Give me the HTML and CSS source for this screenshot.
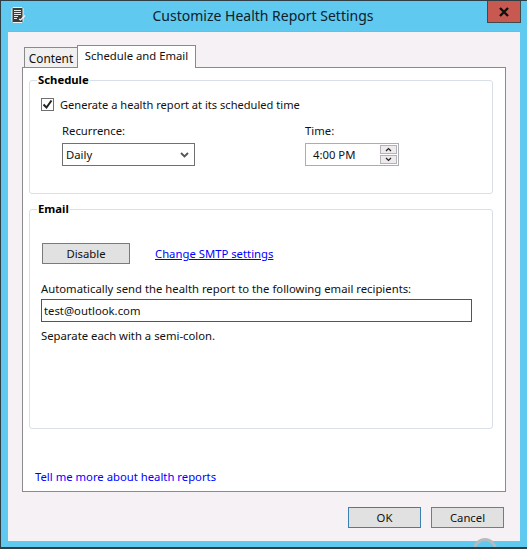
FILE: index.html
```html
<!DOCTYPE html>
<html lang="en">
<head>
  <meta charset="UTF-8">
  <title>Customize Health Report Settings</title>
  <link rel="stylesheet" href="styles.css">
</head>
<body>
  <div class="window">
    <!-- title bar -->
    <div class="title__bar">
      <svg class="title__icon" width="16" height="16" viewBox="0 0 16 16">
        <path d="M3 .5h9l1 1v13l-1 1H3l-1-1v-13z" fill="#3b3b3b" stroke="#eef4f6"/>
        <path d="M4 3.5h7M4 5.5h7M4 7.5h7M4 9.5h4M4 11.5h3" stroke="#e8e8e8"/>
        <path d="M9 12l1.5 1L15 8.500" fill="none" stroke="#f4f4f4" stroke-width="1.300"/>
      </svg>
      <span class="title__text">Customize Health Report Settings</span>
      <button class="close__btn" type="button">
        <svg width="12" height="10" viewBox="0 0 12 10">
          <path d="M2 1l8 8M10 1L2 9" stroke="#111" stroke-width="2.400"/>
        </svg>
      </button>
    </div>

    <div class="client">
      <!-- tabs -->
      <div class="tabs">
        <span class="tab">Content</span>
        <span class="tab tab--active">Schedule and Email</span>
      </div>

      <div class="panel">
        <fieldset class="group group--schedule">
          <legend>Schedule</legend>
          <label class="check__row">
            <span class="check__box">
              <svg width="11" height="11" viewBox="0 0 11 11">
                <path d="M1.500 5.500l3 3 5-7" fill="none" stroke="#222" stroke-width="2"/>
              </svg>
            </span>
            Generate a health report at its scheduled time
          </label>
          <div class="schedule__fields">
            <div class="field field--recurrence">
              <span class="field__label">Recurrence:</span>
              <div class="combo">
                <span>Daily</span>
                <svg width="9" height="6" viewBox="0 0 9 6">
                  <path d="M1 1l3.500 3.500L8 1" fill="none" stroke="#555" stroke-width="1.800"/>
                </svg>
              </div>
            </div>
            <div class="field">
              <span class="field__label">Time:</span>
              <div class="spin">
                <span class="spin__value">4:00 PM</span>
                <div class="spin__btns">
                  <span class="spin__btn">
                    <svg width="7" height="5" viewBox="0 0 7 5"><path d="M1 4l2.500-2.500L6 4" fill="none" stroke="#222" stroke-width="1.200"/></svg>
                  </span>
                  <span class="spin__btn">
                    <svg width="7" height="5" viewBox="0 0 7 5"><path d="M1 1l2.500 2.500L6 1" fill="none" stroke="#222" stroke-width="1.200"/></svg>
                  </span>
                </div>
              </div>
            </div>
          </div>
        </fieldset>

        <fieldset class="group group--email">
          <legend>Email</legend>
          <div class="email__actions">
            <button class="btn btn--disable" type="button">Disable</button>
            <a class="link" href="#">Change SMTP settings</a>
          </div>
          <p class="email__text">Automatically send the health report to the following email recipients:</p>
          <input class="email__input" type="text" value="test@outlook.com">
          <p class="email__hint">Separate each with a semi-colon.</p>
        </fieldset>

        <a class="more__link" href="#">Tell me more about health reports</a>
      </div>

      <div class="footer">
        <button class="btn btn--default" type="button">OK</button>
        <button class="btn" type="button">Cancel</button>
      </div>
    </div>

    <!-- busy ring showing at the bottom edge -->
    <span class="busy__ring"></span>
  </div>
</body>
</html>
```

FILE: styles.css
```css
:root {
  --frame: #5fc9ef;
  --client: #f5f1f5;
  --group-line: #d9dfe9;
  --text: #111;
  --link: #0000ff;
}

* {
  margin: 0;
  padding: 0;
  box-sizing: border-box;
}

html,
body {
  height: 100%;
  overflow: hidden;
}

body {
  font-family: "Noto Sans", sans-serif;
  font-size: 11.3px;
  color: var(--text);
}

.window {
  position: relative;
  width: 527px;
  height: 549px;
  display: flex;
  flex-direction: column;
  overflow: hidden;
  background: var(--frame);
  border: 1px solid #2f3d44;
  border-right-width: 0;
  border-bottom-width: 2px;
}

.title__bar {
  height: 30px;
  flex: none;
  display: flex;
  align-items: flex-start;
  justify-content: center;
}

.title__icon {
  position: absolute;
  left: 9px;
  top: 6px;
}

.title__text {
  margin: 4px 2px 0 0;
  font-size: 14px;
  line-height: 22px;
  color: #10202c;
}

.close__btn {
  position: absolute;
  right: 6px;
  top: -1px;
  width: 34px;
  height: 23px;
  display: flex;
  align-items: center;
  justify-content: center;
  background: #c75950;
  border: 1px solid #3f4a4d;
}

.client {
  flex: 1;
  margin: 0 7px 6px 7px;
  padding: 14px 14px 0 14px;
  background: var(--client);
  border-top: 1px solid #8fb0c8;
  display: flex;
  flex-direction: column;
}

.tabs {
  display: flex;
  align-items: flex-end;
  height: 22px;
  padding-left: 2px;
  margin-bottom: -1px;
  position: relative;
  z-index: 1;
}

.tab {
  width: 53px;
  height: 20px;
  display: flex;
  align-items: center;
  justify-content: center;
  background: #f0f0f0;
  border: 1px solid #8a8a8a;
  border-bottom: 0;
  border-right: 0;
  font-size: 11.8px;
  margin-bottom: 1px;
}

.tab--active {
  width: 119px;
  height: 23px;
  margin-bottom: 0;
  background: #fff;
  border-right: 1px solid #8a8a8a;
  padding-bottom: 3px;
  font-size: 11.3px;
}

.panel {
  height: 425px;
  background: #fff;
  border: 1px solid #8a8a8a;
  padding: 4px 12px 0 6px;
  display: flex;
  flex-direction: column;
}

.group {
  border: 1px solid var(--group-line);
  border-radius: 3px;
}

.group legend {
  margin-left: -4px;
  padding: 0 1px;
  font-weight: bold;
  line-height: 16px;
  color: #000;
}

.group--schedule {
  height: 122px;
  padding: 8px 11px 0 11px;
}

.check__row {
  display: flex;
  align-items: center;
  gap: 6px;
  height: 16px;
  font-size: 11.1px;
}

.check__box {
  width: 13px;
  height: 13px;
  display: flex;
  align-items: center;
  justify-content: center;
  border: 1px solid #707070;
  background: #fff;
}

.schedule__fields {
  display: flex;
  margin: 11px 0 0 21px;
}

.field {
  display: flex;
  flex-direction: column;
  gap: 4px;
}

.field--recurrence {
  margin-right: 110px;
}

.field__label {
  line-height: 16px;
}

.combo {
  width: 133px;
  height: 23px;
  display: flex;
  align-items: center;
  justify-content: space-between;
  padding: 0 5px 0 3px;
  border: 1px solid #707070;
  background: #fff;
}

.spin {
  width: 94px;
  height: 23px;
  display: flex;
  align-items: center;
  justify-content: space-between;
  padding: 0 1px 0 7px;
  border: 1px solid #abadb3;
  background: #fff;
}

.spin__btns {
  display: flex;
  flex-direction: column;
  gap: 1px;
}

.spin__btn {
  width: 17px;
  height: 9px;
  display: flex;
  align-items: center;
  justify-content: center;
  background: #eeeaee;
  border: 1px solid #b4b4b8;
}

.group--email {
  height: 228px;
  margin-top: 7px;
  padding: 26px 11px 0 11px;
}

.email__actions {
  display: flex;
  align-items: center;
  gap: 25px;
  padding-left: 1px;
}

.btn {
  width: 73px;
  height: 21px;
  font-family: inherit;
  font-size: inherit;
  color: var(--text);
  background: #e1e1e1;
  border: 1px solid #7a7a7a;
}

.btn--disable {
  width: 88px;
}

.btn--default {
  border-color: #3c7fb1;
}

.link {
  color: var(--link);
}

.email__text {
  margin-top: 17px;
  line-height: 16px;
}

.email__input {
  display: block;
  width: 431px;
  height: 23px;
  margin-top: 2px;
  padding: 0 2px;
  font-family: inherit;
  font-size: inherit;
  color: var(--text);
  border: 1px solid #2e5f86;
  outline: 0;
}

.email__hint {
  margin-top: 6px;
  line-height: 16px;
}

.more__link {
  margin: 40px 0 0 6px;
  color: var(--link);
  text-decoration: none;
}

.footer {
  display: flex;
  justify-content: flex-end;
  gap: 10px;
  margin-top: 15px;
  padding-right: 2px;
}

/* busy cursor ring, only the top is visible */
.busy__ring {
  position: absolute;
  left: 472px;
  top: 537px;
  width: 24px;
  height: 24px;
  border: 3px solid #b5bcc0;
  border-radius: 50%;
}
```
